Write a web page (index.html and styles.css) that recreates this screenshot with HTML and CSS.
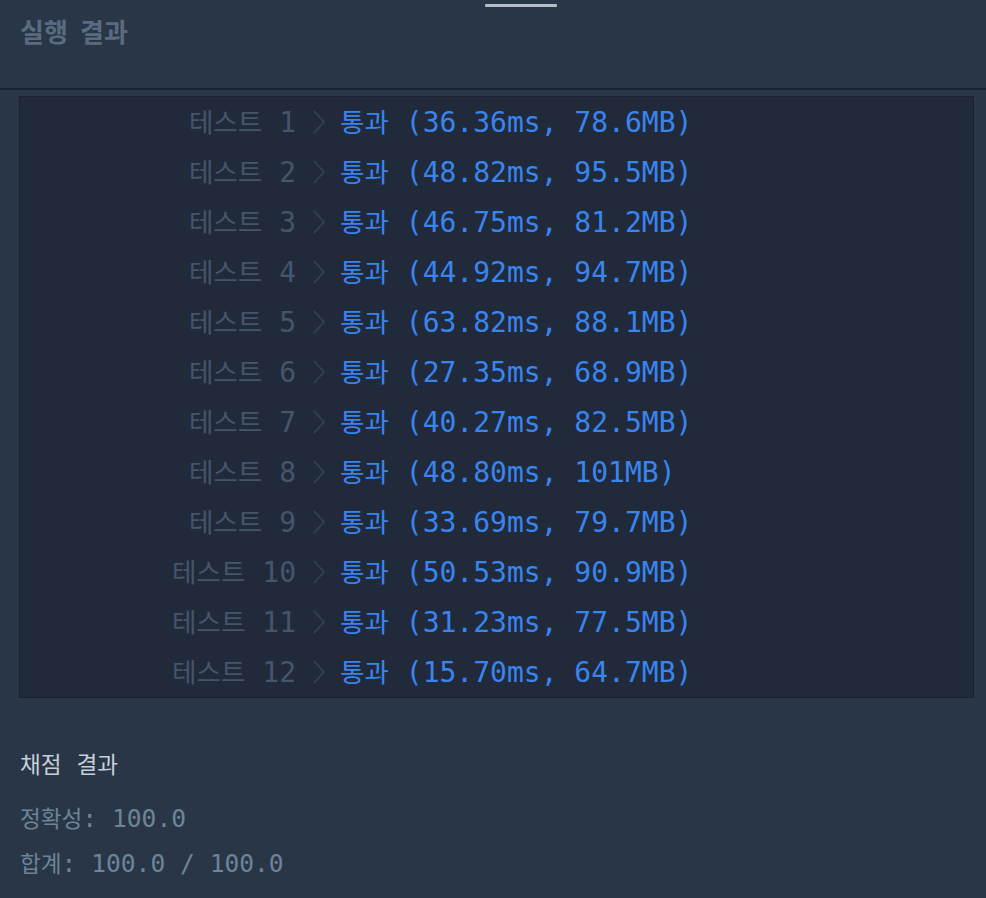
FILE: index.html
```html
<!DOCTYPE html>
<html lang="ko">
<head>
<meta charset="utf-8">
<title>실행 결과</title>
<link rel="stylesheet" href="styles.css">
</head>
<body>
<div class="panel">
  <div class="handle"></div>
  <h2 class="title">실행 결과</h2>
  <div class="divider"></div>
  <div class="console">
    <div class="row"><span class="label"><span class="ko">테스트</span> 1</span><svg class="arrow" viewBox="0 0 14 24"><polyline points="2,1 12,12 2,23"/></svg><span class="passed"><span class="ko">통과</span> (36.36ms, 78.6MB)</span></div>
    <div class="row"><span class="label"><span class="ko">테스트</span> 2</span><svg class="arrow" viewBox="0 0 14 24"><polyline points="2,1 12,12 2,23"/></svg><span class="passed"><span class="ko">통과</span> (48.82ms, 95.5MB)</span></div>
    <div class="row"><span class="label"><span class="ko">테스트</span> 3</span><svg class="arrow" viewBox="0 0 14 24"><polyline points="2,1 12,12 2,23"/></svg><span class="passed"><span class="ko">통과</span> (46.75ms, 81.2MB)</span></div>
    <div class="row"><span class="label"><span class="ko">테스트</span> 4</span><svg class="arrow" viewBox="0 0 14 24"><polyline points="2,1 12,12 2,23"/></svg><span class="passed"><span class="ko">통과</span> (44.92ms, 94.7MB)</span></div>
    <div class="row"><span class="label"><span class="ko">테스트</span> 5</span><svg class="arrow" viewBox="0 0 14 24"><polyline points="2,1 12,12 2,23"/></svg><span class="passed"><span class="ko">통과</span> (63.82ms, 88.1MB)</span></div>
    <div class="row"><span class="label"><span class="ko">테스트</span> 6</span><svg class="arrow" viewBox="0 0 14 24"><polyline points="2,1 12,12 2,23"/></svg><span class="passed"><span class="ko">통과</span> (27.35ms, 68.9MB)</span></div>
    <div class="row"><span class="label"><span class="ko">테스트</span> 7</span><svg class="arrow" viewBox="0 0 14 24"><polyline points="2,1 12,12 2,23"/></svg><span class="passed"><span class="ko">통과</span> (40.27ms, 82.5MB)</span></div>
    <div class="row"><span class="label"><span class="ko">테스트</span> 8</span><svg class="arrow" viewBox="0 0 14 24"><polyline points="2,1 12,12 2,23"/></svg><span class="passed"><span class="ko">통과</span> (48.80ms, 101MB)</span></div>
    <div class="row"><span class="label"><span class="ko">테스트</span> 9</span><svg class="arrow" viewBox="0 0 14 24"><polyline points="2,1 12,12 2,23"/></svg><span class="passed"><span class="ko">통과</span> (33.69ms, 79.7MB)</span></div>
    <div class="row"><span class="label"><span class="ko">테스트</span> 10</span><svg class="arrow" viewBox="0 0 14 24"><polyline points="2,1 12,12 2,23"/></svg><span class="passed"><span class="ko">통과</span> (50.53ms, 90.9MB)</span></div>
    <div class="row"><span class="label"><span class="ko">테스트</span> 11</span><svg class="arrow" viewBox="0 0 14 24"><polyline points="2,1 12,12 2,23"/></svg><span class="passed"><span class="ko">통과</span> (31.23ms, 77.5MB)</span></div>
    <div class="row"><span class="label"><span class="ko">테스트</span> 12</span><svg class="arrow" viewBox="0 0 14 24"><polyline points="2,1 12,12 2,23"/></svg><span class="passed"><span class="ko">통과</span> (15.70ms, 64.7MB)</span></div>
  </div>
  <div class="grade">
    <h3 class="grade-title"><span class="ko">채점</span> <span class="ko">결과</span></h3>
    <p class="grade-line"><span class="ko">정확성</span>: 100.0</p>
    <p class="grade-line"><span class="ko">합계</span>: 100.0 / 100.0</p>
  </div>
</div>
</body>
</html>
```
FILE: styles.css
```css
html, body {
  margin: 0;
  padding: 0;
  background: #293648;
}

.panel {
  width: 986px;
  height: 898px;
  background: #293648;
  overflow: hidden;
}

.handle {
  width: 72px;
  height: 3px;
  margin: 4px 0 0 485px;
  background: #b4bcc4;
  border-radius: 1px;
}

.title {
  margin: 7px 0 0 20px;
  font-family: "Noto Sans CJK KR", sans-serif;
  font-weight: 700;
  font-size: 26px;
  line-height: 34px;
  word-spacing: 5px;
  color: #5a6b80;
}

.divider {
  margin-top: 40px;
  height: 2px;
  background: #1b2332;
}

.console {
  margin: 6px 12px 0 19px;
  background: #212a3b;
  border: 1px solid #1a2231;
  font-family: "DejaVu Sans Mono", monospace;
  font-size: 28px;
}

.ko {
  font-family: "Noto Sans CJK KR", sans-serif;
  font-size: 0.95em;
}

.row {
  display: flex;
  align-items: center;
  height: 50px;
  line-height: 28px;
  white-space: pre;
}

.label {
  width: 276px;
  text-align: right;
  color: #45556a;
}

.arrow {
  width: 14px;
  height: 24px;
  margin-left: 16px;
  fill: none;
  stroke: #35445a;
  stroke-width: 1.5;
}

.passed {
  margin-left: 14px;
  color: #3a84ee;
}

.grade {
  margin: 50px 0 0 20px;
  font-family: "DejaVu Sans Mono", monospace;
  font-size: 24.6px;
}

.grade .ko {
  font-size: 22.6px;
}

.grade-title {
  margin: 0;
  font-weight: 400;
  font-size: 24.6px;
  line-height: 32px;
  white-space: pre;
  color: #c6ced8;
}

.grade-line {
  margin: 21px 0 0;
  line-height: 32px;
  white-space: pre;
  color: #6e8497;
}

.grade-line + .grade-line {
  margin-top: 12px;
}
```
